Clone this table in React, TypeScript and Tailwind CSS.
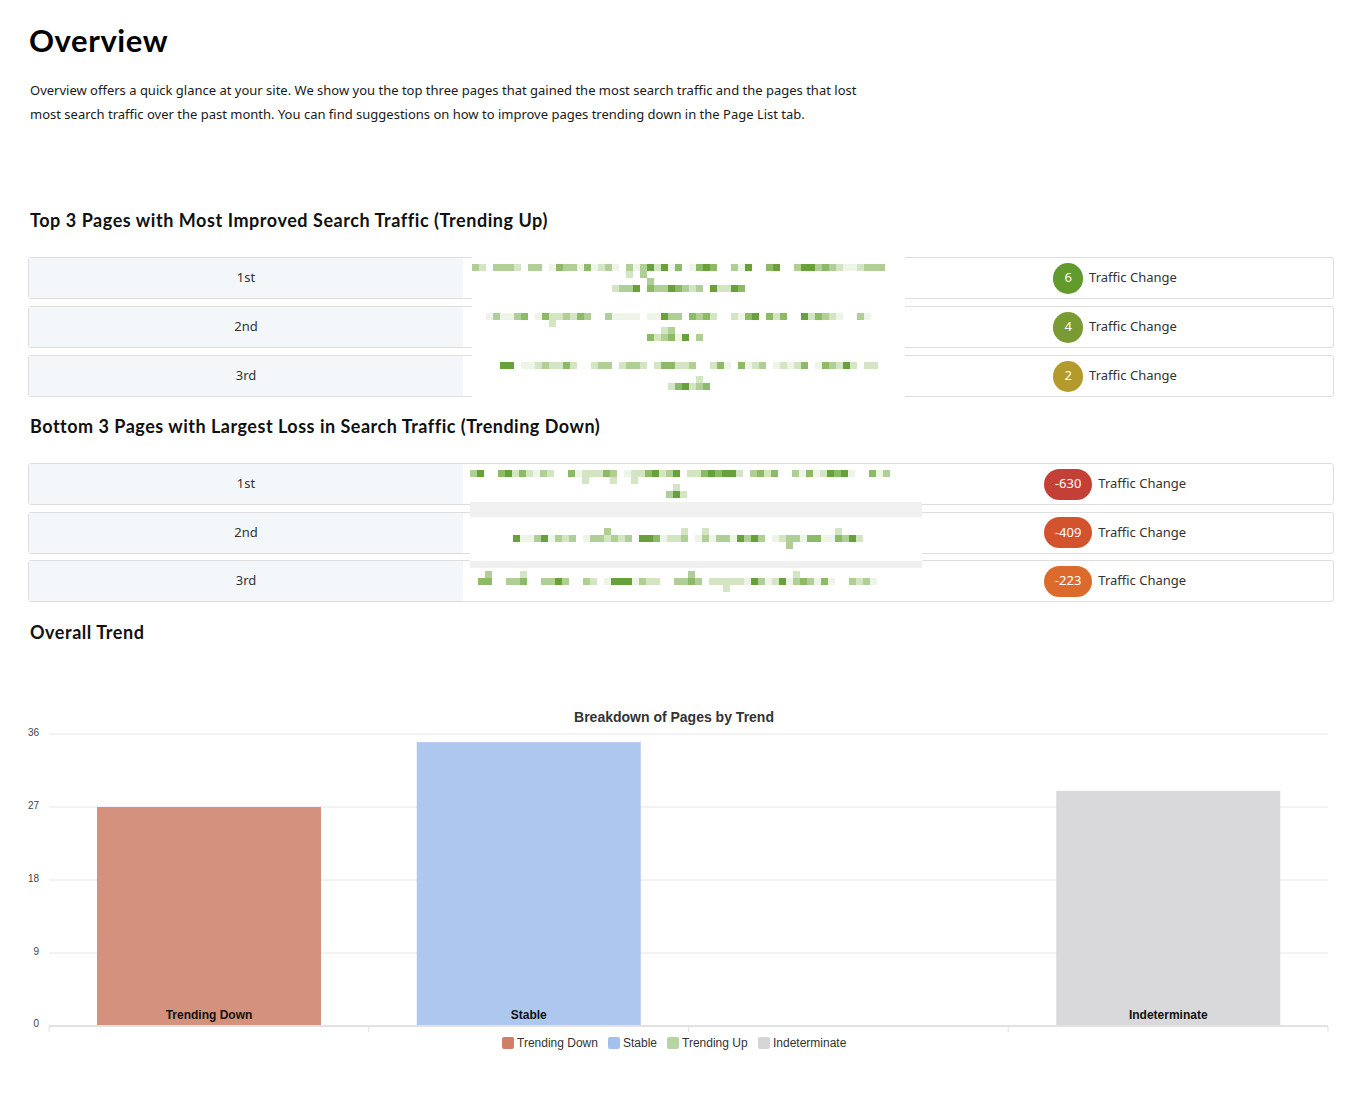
import React from 'react';

const GREENS = ['', '#eef5e8', '#d3e5c3', '#b0cf97', '#8cba66', '#68a13a'];

const makeRand = (seed: number) => {
  let s = seed;
  return () => {
    s = (s * 16807) % 2147483647;
    return (s - 1) / 2147483646;
  };
};

const pickLevel = (r: () => number) => {
  const v = r();
  if (v < 0.12) return 1;
  if (v < 0.36) return 2;
  if (v < 0.62) return 3;
  if (v < 0.84) return 4;
  return 5;
};

const makeLine = (w: number, r: () => number) => {
  const out: number[] = [];
  while (out.length < w) {
    const len = 2 + Math.floor(r() * 7);
    for (let i = 0; i < len && out.length < w; i++) out.push(pickLevel(r));
    const gap = 1 + Math.floor(r() * 2);
    if (out.length >= w - 1) break;
    for (let i = 0; i < gap && out.length < w - 1; i++) out.push(r() < 0.3 ? 1 : 0);
  }
  return out;
};

const sparse = (main: number[], r: () => number, p: number) =>
  main.map((v) => (v >= 2 && r() < p ? (r() < 0.5 ? 2 : 3) : 0));

// blurred link text, drawn as 7px blocks
const Pixelated: React.FC<{ lines: number[]; seed: number }> = ({ lines, seed }) => {
  const r = makeRand(seed);
  const W = lines[0];
  const pad = (row: number[]) => {
    const off = Math.floor((W - row.length) / 2);
    const full = new Array(W).fill(0);
    row.forEach((v, i) => (full[off + i] = v));
    return full;
  };
  const rows: number[][] = [];
  if (lines.length === 1) {
    const m = makeLine(lines[0], r);
    rows.push(sparse(m, r, 0.08), m, sparse(m, r, 0.05));
  } else {
    const m1 = makeLine(lines[0], r);
    const m2 = pad(makeLine(lines[1], r));
    rows.push(m1, sparse(m1, r, 0.05), sparse(m2, r, 0.15), m2);
  }
  return (
    <svg width={W * 7} height={rows.length * 7} className="block shrink-0">
      {rows.map((row, y) =>
        row.map((v, x) =>
          v ? <rect key={`${y}-${x}`} x={x * 7} y={y * 7} width={7} height={7} fill={GREENS[v]} /> : null
        )
      )}
    </svg>
  );
};

type Row = {
  rank: string;
  value: string;
  badge: string;
  lines: number[];
  seed: number;
  pad: string;
};

const topRows: Row[] = [
  { rank: '1st', value: '6', badge: 'bg-[#619b2e]', lines: [59, 20], seed: 11, pad: 'pl-0' },
  { rank: '2nd', value: '4', badge: 'bg-[#7a9a33]', lines: [55, 8], seed: 23, pad: 'pl-[14px]' },
  { rank: '3rd', value: '2', badge: 'bg-[#b49a2c]', lines: [54, 6], seed: 37, pad: 'pl-[28px]' },
];

const bottomRows: Row[] = [
  { rank: '1st', value: '-630', badge: 'bg-[#c43f35]', lines: [60, 4], seed: 41, pad: 'pl-[7px]' },
  { rank: '2nd', value: '-409', badge: 'bg-[#d2532d]', lines: [50], seed: 53, pad: 'pl-[43px]' },
  { rank: '3rd', value: '-223', badge: 'bg-[#dc6a2c]', lines: [57], seed: 67, pad: 'pl-[15px]' },
];

const Badge: React.FC<{ value: string; color: string }> = ({ value, color }) => (
  <div className="flex items-center gap-[6px]">
    <span
      className={`${color} h-[31px] min-w-[30px] px-[11px] rounded-full flex items-center justify-center text-white text-[13px]`}
    >
      {value}
    </span>
    <span className="text-[13px] text-[#333]">Traffic Change</span>
  </div>
);

const RankCell: React.FC<{ rank: string }> = ({ rank }) => (
  <div className="w-[434px] shrink-0 bg-[#f4f7fa] flex items-center justify-center text-[13px] text-[#333]">
    {rank}
  </div>
);

const TopTable: React.FC = () => (
  <div className="mt-[25px] flex flex-col gap-[7px]">
    {topRows.map((row) => (
      <div key={row.rank} className="flex h-[42px] rounded-[3px] border border-[#dedede]">
        <RankCell rank={row.rank} />
        <div className="w-[442px] shrink-0 flex">
          <div className={`relative ml-[9px] w-[433px] -my-px bg-white flex items-center ${row.pad}`}>
            <Pixelated lines={row.lines} seed={row.seed} />
          </div>
        </div>
        <div className="flex-1 flex items-center justify-center pr-[8px]">
          <Badge value={row.value} color={row.badge} />
        </div>
      </div>
    ))}
  </div>
);

const BottomTable: React.FC = () => (
  <div className="mt-[25px] flex flex-col gap-[6.5px]">
    {bottomRows.map((row, i) => (
      <div key={row.rank} className="flex h-[42px] rounded-[3px] border border-[#dedede]">
        <RankCell rank={row.rank} />
        {i === 1 ? (
          <div className="w-[442px] shrink-0 flex">
            <div
              className={`relative z-10 ml-[7px] -mr-[17px] w-[452px] -mt-[11px] -mb-[15px] border-t-[15px] border-b-[7px] border-[#f0f0f0] bg-white flex items-center ${row.pad}`}
            >
              <Pixelated lines={row.lines} seed={row.seed} />
            </div>
          </div>
        ) : (
          <div className={`w-[442px] shrink-0 flex items-center ${row.pad}`}>
            <Pixelated lines={row.lines} seed={row.seed} />
          </div>
        )}
        <div className="flex-1 flex items-center justify-center pr-[8px]">
          <Badge value={row.value} color={row.badge} />
        </div>
      </div>
    ))}
  </div>
);

const yOf = (v: number) => 1026 - v * (292 / 36);

const bars = [
  { label: 'Trending Down', value: 27, fill: '#d4917e' },
  { label: 'Stable', value: 35, fill: '#aec7ef' },
  { label: 'Trending Up', value: 0, fill: '#b7d4a5' },
  { label: 'Indeterminate', value: 29, fill: '#d9d9db' },
];

const legend = [
  { label: 'Trending Down', x: 502, fill: '#d07f66' },
  { label: 'Stable', x: 608, fill: '#a5bfef' },
  { label: 'Trending Up', x: 667, fill: '#b7d4a5' },
  { label: 'Indeterminate', x: 758, fill: '#d5d5d5' },
];

const Chart: React.FC = () => {
  const font = 'Liberation Sans, Arial, sans-serif';
  const slot = (1328 - 49) / 4;
  return (
    <svg width={1349} height={380} viewBox="0 690 1349 380" className="block mt-[46px]">
      <text x={674} y={722} textAnchor="middle" fontFamily={font} fontSize={14} fontWeight={700} fill="#333">
        Breakdown of Pages by Trend
      </text>
      {[36, 27, 18, 9].map((v) => (
        <g key={v}>
          <line x1={49} x2={1328} y1={yOf(v)} y2={yOf(v)} stroke="#e6e6e6" strokeWidth={1} />
          <text x={39} y={yOf(v) + 2} textAnchor="end" fontFamily={font} fontSize={10} fill="#444">
            {v}
          </text>
        </g>
      ))}
      <text x={39} y={1027} textAnchor="end" fontFamily={font} fontSize={10} fill="#444">
        0
      </text>
      {bars.map((b, i) =>
        b.value > 0 ? (
          <g key={b.label}>
            <rect x={49 + slot * i + 48} y={yOf(b.value)} width={224} height={1025 - yOf(b.value)} fill={b.fill} />
            <text
              x={49 + slot * i + 160}
              y={1019}
              textAnchor="middle"
              fontFamily={font}
              fontSize={12}
              fontWeight={700}
              fill="#111"
            >
              {b.label}
            </text>
          </g>
        ) : null
      )}
      <line x1={49} x2={1328} y1={1026} y2={1026} stroke="#e2e2e2" strokeWidth={2} />
      {[0, 1, 2, 3, 4].map((i) => (
        <line key={i} x1={49 + slot * i} x2={49 + slot * i} y1={1026} y2={1032} stroke="#e2e2e2" strokeWidth={1} />
      ))}
      {legend.map((l) => (
        <g key={l.label}>
          <rect x={l.x} y={1037} width={12} height={12} rx={2} fill={l.fill} />
          <text x={l.x + 15} y={1047} fontFamily={font} fontSize={12} fill="#333">
            {l.label}
          </text>
        </g>
      ))}
    </svg>
  );
};

const App: React.FC = () => {
  return (
    <div className="min-h-screen bg-white font-['Noto_Sans',sans-serif] text-[#222]">
      <div className="pl-[28px] pt-[22px] w-[1334px]">
        <h1 className="ml-[1px] text-[31px] leading-[36px] tracking-[0.6px] font-bold font-['Lato',sans-serif] text-black">
          Overview
        </h1>
        <p className="mt-[20px] ml-[2px] w-[850px] text-[13px] leading-[24px] text-[#1a1a1a]">
          Overview offers a quick glance at your site. We show you the top three pages that gained the most search
          traffic and the pages that lost most search traffic over the past month. You can find suggestions on how to
          improve pages trending down in the Page List tab.
        </p>

        <h2 className="mt-[82px] ml-[2px] text-[18px] leading-[24px] tracking-[0.55px] font-bold font-['Lato',sans-serif] text-[#111]">
          Top 3 Pages with Most Improved Search Traffic (Trending Up)
        </h2>
        <TopTable />

        <h2 className="mt-[17px] ml-[2px] text-[18px] leading-[24px] tracking-[0.5px] font-bold font-['Lato',sans-serif] text-[#111]">
          Bottom 3 Pages with Largest Loss in Search Traffic (Trending Down)
        </h2>
        <BottomTable />

        <h2 className="mt-[18px] ml-[2px] text-[18px] leading-[24px] tracking-[0.55px] font-bold font-['Lato',sans-serif] text-[#111]">
          Overall Trend
        </h2>
      </div>
      <Chart />
    </div>
  );
};

export default App;
